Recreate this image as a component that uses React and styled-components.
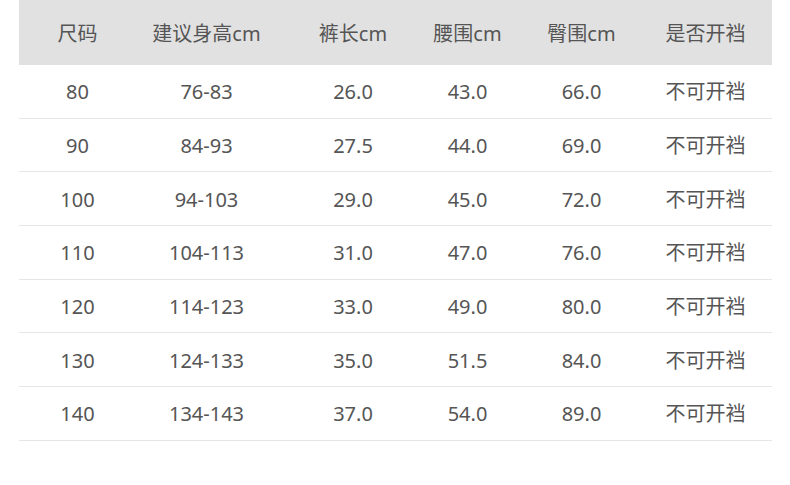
import React from 'react';
import styled, { createGlobalStyle } from 'styled-components';

const GlobalStyle = createGlobalStyle`
  html, body {
    margin: 0;
    padding: 0;
    background: #ffffff;
  }
  body {
    font-family: "Noto Sans", "Noto Sans CJK SC", sans-serif;
  }
`;

const Page = styled.div`
  width: 790px;
  height: 485px;
  padding: 0 18px 0 19px;
  box-sizing: border-box;
`;

const Table = styled.div`
  width: 753px;
  display: flex;
  flex-direction: column;
`;

const Row = styled.div`
  display: grid;
  grid-template-columns: 117px 141px 152px 77px 151px 97px;
  padding: 2px 18px 0 0;
  height: ${(p) => (p.$head ? '65px' : '53.7px')};
  box-sizing: border-box;
  align-items: center;
  background: ${(p) => (p.$head ? '#e1e1e1' : '#ffffff')};
  border-bottom: ${(p) => (p.$head ? 'none' : '1.5px solid #e6e6e6')};
`;

const Cell = styled.div`
  text-align: center;
  white-space: nowrap;
  font-size: 20px;
  line-height: 1;
  color: #555555;
  font-family: "Noto Sans", "Noto Sans CJK SC", sans-serif;
`;

const headers = ['尺码', '建议身高cm', '裤长cm', '腰围cm', '臀围cm', '是否开裆'];

const rows = [
  ['80', '76-83', '26.0', '43.0', '66.0', '不可开裆'],
  ['90', '84-93', '27.5', '44.0', '69.0', '不可开裆'],
  ['100', '94-103', '29.0', '45.0', '72.0', '不可开裆'],
  ['110', '104-113', '31.0', '47.0', '76.0', '不可开裆'],
  ['120', '114-123', '33.0', '49.0', '80.0', '不可开裆'],
  ['130', '124-133', '35.0', '51.5', '84.0', '不可开裆'],
  ['140', '134-143', '37.0', '54.0', '89.0', '不可开裆'],
];

const App = () => {
  return (
    <>
      <GlobalStyle />
      <Page>
        <Table>
          <Row $head>
            {headers.map((h) => (
              <Cell key={h}>{h}</Cell>
            ))}
          </Row>
          {rows.map((r) => (
            <Row key={r[0]}>
              {r.map((v, i) => (
                <Cell key={i}>{v}</Cell>
              ))}
            </Row>
          ))}
        </Table>
      </Page>
    </>
  );
};

export default App;
